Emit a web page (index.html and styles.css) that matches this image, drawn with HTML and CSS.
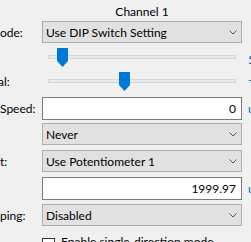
FILE: index.html
```html
<!DOCTYPE html>
<html>
<head>
<meta charset="utf-8">
<link rel="stylesheet" href="styles.css">
</head>
<body>
<div class="panel">
  <div class="title">Channel 1</div>

  <div class="row row-combo-first">
    <span class="label">ode:</span>
    <div class="field combo"><span>Use DIP Switch Setting</span><svg class="chev" width="8" height="5" viewBox="0 0 8 5"><path d="M0.5 0.5 L4 4 L7.5 0.5" fill="none" stroke="#555" stroke-width="1"/></svg></div>
  </div>

  <div class="row row-slider row-slider-first">
    <span class="label"></span>
    <div class="field slider"><div class="track"></div><svg class="thumb" style="left:15px" width="11" height="19" viewBox="0 0 11 19"><polygon points="0,0 11,0 11,13 5.5,19 0,13" fill="#0078d7"/></svg></div>
    <span class="side side-slider1">5</span>
  </div>

  <div class="row row-slider row-slider-second">
    <span class="label label-al">al:</span>
    <div class="field slider"><div class="track"></div><svg class="thumb" style="left:77px" width="11" height="19" viewBox="0 0 11 19"><polygon points="0,0 11,0 11,13 5.5,19 0,13" fill="#0078d7"/></svg></div>
    <span class="side side-slider2">-</span>
  </div>

  <div class="row row-text row-speed">
    <span class="label">Speed:</span>
    <div class="field textbox">0</div>
    <span class="side">u</span>
  </div>

  <div class="row row-combo row-never">
    <span class="label"></span>
    <div class="field combo"><span>Never</span><svg class="chev" width="8" height="5" viewBox="0 0 8 5"><path d="M0.5 0.5 L4 4 L7.5 0.5" fill="none" stroke="#555" stroke-width="1"/></svg></div>
  </div>

  <div class="row row-combo">
    <span class="label label-t">t:</span>
    <div class="field combo"><span>Use Potentiometer 1</span><svg class="chev" width="8" height="5" viewBox="0 0 8 5"><path d="M0.5 0.5 L4 4 L7.5 0.5" fill="none" stroke="#555" stroke-width="1"/></svg></div>
  </div>

  <div class="row row-text">
    <span class="label"></span>
    <div class="field textbox">1999.97</div>
    <span class="side">u</span>
  </div>

  <div class="row row-combo row-clamp">
    <span class="label">ping:</span>
    <div class="field combo"><span>Disabled</span><svg class="chev" width="8" height="5" viewBox="0 0 8 5"><path d="M0.5 0.5 L4 4 L7.5 0.5" fill="none" stroke="#555" stroke-width="1"/></svg></div>
  </div>

  <div class="row row-check">
    <span class="label"></span>
    <span class="checkbox"></span>
    <span class="check-text">Enable single-direction mode</span>
  </div>
</div>
</body>
</html>
```

FILE: styles.css
```css
html, body {
  margin: 0;
  padding: 0;
  background: #f0f0f0;
}
body {
  width: 251px;
  height: 242px;
  overflow: hidden;
  font-family: Lato, "Noto Sans", sans-serif;
  font-size: 12px;
  color: #000;
}
.panel {
  display: flex;
  flex-direction: column;
  width: 300px;
}
.title {
  height: 21px;
  box-sizing: border-box;
  padding-top: 4px;
  line-height: 16px;
  margin-left: 42px;
  width: 200px;
  text-align: center;
}
.row {
  display: flex;
  align-items: center;
  flex: none;
}
.label {
  width: 42px;
  flex: none;
  white-space: nowrap;
  overflow: hidden;
}
.label-al { text-indent: -2px; }
.field {
  width: 200px;
  flex: none;
  box-sizing: border-box;
}
.side {
  margin-left: 6px;
  color: #0066cc;
  white-space: nowrap;
}
.combo {
  height: 22px;
  border: 1px solid #adadad;
  background: #e1e1e1;
  display: flex;
  align-items: center;
  justify-content: space-between;
  padding: 0 4px 0 3px;
}
.chev { display: block; }
.textbox {
  height: 23px;
  border: 1px solid #7a7a7a;
  background: #fff;
  text-align: right;
  line-height: 21px;
  padding-right: 5px;
}
.row-combo-first { height: 22px; }
.row-slider { height: 19px; margin-top: 5px; }
.row-text { height: 23px; margin-top: 5px; }
.row-speed { margin-top: 6px; }
.row-combo { height: 22px; margin-top: 5px; }
.row-never { margin-top: 3px; }
.row-clamp { margin-top: 4px; }
.slider {
  position: relative;
  height: 19px;
}
.track {
  position: absolute;
  left: 6px;
  right: 6px;
  top: 7px;
  height: 4px;
  box-sizing: border-box;
  border: 1px solid #d6d6d6;
  background: #e7eaea;
}
.thumb {
  position: absolute;
  top: 0;
  display: block;
}
.side-slider1 { align-self: flex-start; line-height: 16px; margin-top: 4px; }
.side-slider2 { align-self: flex-start; line-height: 16px; }
.row-check {
  margin-top: 11px;
  align-items: flex-start;
  height: 14px;
}
.checkbox {
  width: 13px;
  height: 13px;
  box-sizing: border-box;
  border: 1px solid #333;
  background: #fff;
  flex: none;
  margin-top: 1px;
}
.check-text {
  margin-left: 6px;
  line-height: 12px;
  margin-top: -1px;
  white-space: nowrap;
}
```
